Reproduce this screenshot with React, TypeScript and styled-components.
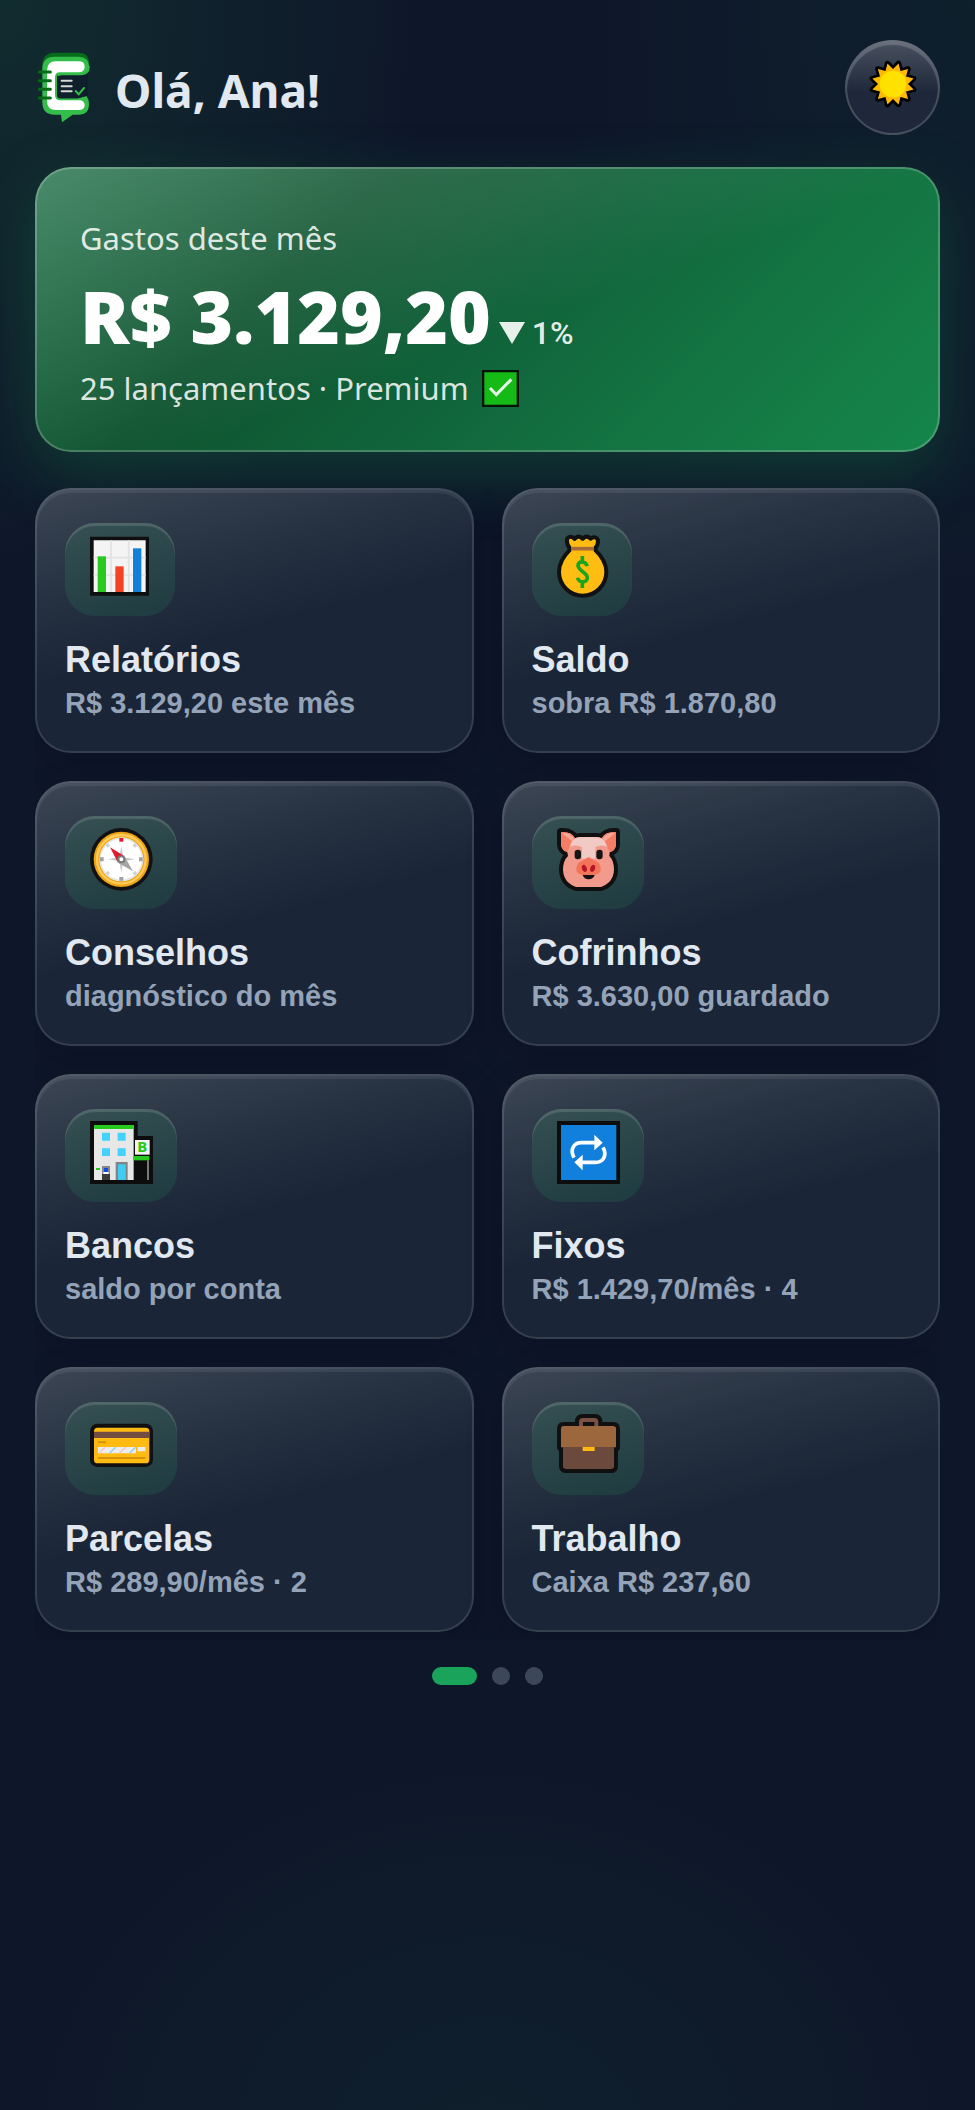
import React, { useState } from 'react';
import styled, { createGlobalStyle } from 'styled-components';

const uiFont = "'Segoe UI', 'Noto Sans', sans-serif";
const buttonFont = "'Liberation Sans', Arial, sans-serif";

const GlobalStyle = createGlobalStyle`
  * {
    box-sizing: border-box;
  }

  body {
    margin: 0;
    background: #0f172a;
    font-family: ${uiFont};
    color: #e2e8f0;
  }
`;

const Page = styled.main`
  min-height: 100vh;
  padding: 40px 35px;
  background:
    radial-gradient(ellipse 45% 28% at 0% 0%, rgba(34, 160, 80, 0.16), transparent),
    radial-gradient(ellipse 45% 36% at 100% 0%, rgba(20, 150, 90, 0.08), transparent),
    radial-gradient(ellipse 54% 21% at 50% 102%, rgba(24, 120, 70, 0.1), transparent),
    #0e1629;
`;

const Header = styled.header`
  display: flex;
  align-items: center;
  justify-content: space-between;
  margin-bottom: 32px;
`;

const Brand = styled.div`
  display: flex;
  align-items: center;
  gap: 22px;
`;

const Greeting = styled.h1`
  margin: 0;
  padding-top: 4px;
  font-size: 46px;
  line-height: 56px;
  font-weight: 700;
`;

const ThemeButton = styled.button`
  display: flex;
  align-items: center;
  justify-content: center;
  width: 95px;
  height: 95px;
  padding: 0 0 8px;
  border: 2px solid rgba(255, 255, 255, 0.18);
  border-radius: 50%;
  background: linear-gradient(180deg, rgba(255, 255, 255, 0.2), rgba(255, 255, 255, 0) 55%), #1e283a;
  background-origin: border-box;
  box-shadow: inset 0 3px 1px rgba(255, 255, 255, 0.18);
  cursor: pointer;
`;

const Hero = styled.section`
  padding: 46px 43px 39px;
  border: 2px solid rgba(255, 255, 255, 0.22);
  border-radius: 36px;
  background:
    linear-gradient(160deg, rgba(255, 255, 255, 0.22), rgba(255, 255, 255, 0.1) 30%, rgba(255, 255, 255, 0) 55%),
    linear-gradient(135deg, #166a40 0%, #0f5430 30%, #10633a 52%, #147643 75%, #15864b 100%);
  background-origin: border-box;
  box-shadow: 0 22px 64px rgba(22, 150, 80, 0.28);
  margin-bottom: 36px;
`;

const HeroText = styled.p`
  display: flex;
  align-items: center;
  gap: 13px;
  margin: 0;
  font-size: 31px;
  line-height: 46px;
  color: rgba(255, 255, 255, 0.85);
`;

const AmountRow = styled.div`
  display: flex;
  align-items: baseline;
  gap: 8px;
  margin: 13px 0 7px;
`;

const Amount = styled.strong`
  font-size: 73px;
  line-height: 84px;
  font-weight: 900;
  color: #fff;
`;

const Change = styled.span`
  display: flex;
  align-items: baseline;
  gap: 7px;
  font-family: Roboto, sans-serif;
  font-size: 32px;
  font-weight: 500;
  color: rgba(255, 255, 255, 0.9);
`;

const Carousel = styled.div`
  overflow: hidden;
  padding-bottom: 8px;
`;

const Grid = styled.div`
  display: grid;
  grid-template-columns: repeat(2, 1fr);
  gap: 28px;
`;

const Card = styled.button`
  display: flex;
  flex-direction: column;
  align-items: flex-start;
  padding: 33px 28px 30px;
  border: 2px solid rgba(255, 255, 255, 0.12);
  border-radius: 36px;
  background:
    linear-gradient(165deg, rgba(255, 255, 255, 0.15), rgba(255, 255, 255, 0.05) 30%, rgba(255, 255, 255, 0) 52%),
    #1a2637;
  background-origin: border-box;
  box-shadow: inset 0 3px 1px rgba(255, 255, 255, 0.08), 0 12px 36px rgba(12, 8, 28, 0.18);
  font-family: ${buttonFont};
  font-weight: 700;
  text-align: left;
  cursor: pointer;
`;

const Chip = styled.span`
  display: flex;
  height: 93px;
  padding: 12px 25px;
  margin-bottom: 24px;
  border-radius: 30px;
  background: linear-gradient(165deg, #365053, #203d41 90%);
  box-shadow: inset 0 3px 1px rgba(255, 255, 255, 0.14);

  svg {
    overflow: visible;
  }
`;

const CardTitle = styled.span`
  font-size: 36px;
  line-height: 40px;
  color: #e2e8f0;
  margin-bottom: 5px;
`;

const CardHint = styled.span`
  font-size: 29px;
  line-height: 36px;
  color: #94a3b8;
`;

const Pager = styled.nav`
  display: flex;
  justify-content: center;
  gap: 15px;
  margin-top: 27px;
`;

type DotProps = {
  $active: boolean;
}
const Dot = styled.button<DotProps>`
  width: ${props => props.$active ? '45px' : '18px'};
  height: 18px;
  padding: 0;
  border: 0;
  border-radius: 9px;
  background: ${props => props.$active ? '#19a35b' : '#3d475a'};
  cursor: pointer;
`;

const Logo = () => (
  <svg width="58" height="71" viewBox="-9 0 174 213" aria-hidden="true">
    <path d="M50 2H122Q153 2 153 34V60H13V42Q13 2 50 2Z" fill="#076b1c" />
    <path
      d="M50 14H122Q153 16 153 42Q153 66 130 67H68Q57 67 57 78V128Q57 139 68 139H122L145 131Q153 142 153 156Q153 188 122 188H104L72 211L69 188H50Q13 188 13 150V52Q13 14 50 14Z"
      fill="#34bd4b"
    />
    <path d="M57 78Q57 67 68 67H128Q146 64 150 56V131L118 139H68Q57 139 57 128Z" fill="#0f1f2b" />
    <path d="M60 71Q64 67 72 67H130Q153 66 153 42" fill="none" stroke="#34bd4b" strokeWidth="5" />
    <path
      d="M54 28H122Q140 28 140 44Q140 60 122 61H66Q51 61 51 76V130Q51 145 66 145H128Q140 148 140 160Q140 174 122 174H54Q27 174 27 146V56Q27 28 54 28Z"
      fill="#fff"
    />
    <path d="M4 60H37M4 86H37M4 112H37M4 138H37" stroke="#066a19" strokeWidth="9" strokeLinecap="round" />
    <path d="M71 86H101M71 103H101M71 118H101" stroke="#d5d8d5" strokeWidth="6" strokeLinecap="round" />
    <path d="M113 117L122 127L138 108" fill="none" stroke="#34bd4b" strokeWidth="6" strokeLinecap="round" />
  </svg>
);

// 24 alternating vertices, twelve rays
const sunPoints = Array.from({ length: 24 }, (_, i) => {
  const radius = i % 2 ? 64 : 45;
  const angle = (i * Math.PI) / 12;
  return `${(radius * Math.sin(angle)).toFixed(1)},${(-radius * Math.cos(angle)).toFixed(1)}`;
}).join(' ');

const SunIcon = () => (
  <svg width="48" height="48" viewBox="-72 -72 144 144" aria-hidden="true">
    <polygon points={sunPoints} fill="#000" stroke="#000" strokeWidth="16" strokeLinejoin="round" />
    <polygon points={sunPoints} fill="#ffb900" />
    <circle r="40" fill="#ffe100" />
  </svg>
);

const CheckIcon = () => (
  <svg width="37" height="37" viewBox="0 0 111 111" role="img" aria-label="ativo">
    <path d="M0 0H111V111H0Z" fill="#06120a" />
    <path d="M7 7H104V104H7Z" fill="#16ba16" />
    <path d="M24 54L43 74L88 28" fill="none" stroke="#e6f3e8" strokeWidth="9" />
  </svg>
);

const ChartIcon = () => (
  <svg width="60" height="63" viewBox="0 0 180 189" aria-hidden="true">
    <path d="M0 5H177V182H0Z" fill="#0f0f0f" />
    <path d="M11 16H167V171H11Z" fill="#f4f4f4" />
    <path d="M63 16V171M116 16V171M11 68H167M11 120H167" stroke="#e2e2e2" strokeWidth="5" />
    <path d="M23 64H48V171H23Z" fill="#28ca1f" />
    <path d="M76 94H101V171H76Z" fill="#f44323" />
    <path d="M129 40H154V171H129Z" fill="#1080dc" />
  </svg>
);

const bagShape = 'M36 14Q41 8 47 15Q53 21 59 14Q65 8 71 14Q77 21 83 14Q89 8 95 14Q101 20 107 14Q114 10 117 17Q118 25 110 36V49Q142 79 142 111A65 65 0 0 1 12 111Q12 79 43 49V36Q34 25 36 14Z';

const MoneyBagIcon = () => (
  <svg width="50" height="63" viewBox="0 0 150 189" aria-hidden="true">
    <path d={bagShape} fill="#111" stroke="#111" strokeWidth="24" strokeLinejoin="round" />
    <path d={bagShape} fill="#ffbd13" />
    <path d="M42 41H111" stroke="#a66a38" strokeWidth="11" />
    <path
      d="M76 63V80M76 143V159M90 94C88 78 63 76 63 91C63 108 91 112 91 128C91 146 64 144 62 128"
      fill="none"
      stroke="#1aa51d"
      strokeWidth="11"
    />
  </svg>
);

const CompassIcon = () => (
  <svg width="62" height="63" viewBox="0 0 186 189" aria-hidden="true">
    <circle cx="94" cy="94" r="94" fill="#111" />
    <circle cx="94" cy="94" r="83" fill="#eda514" />
    <circle cx="94" cy="94" r="73" fill="none" stroke="#ffcb5c" strokeWidth="7" />
    <circle cx="94" cy="94" r="66" fill="#e4e7ea" />
    <circle cx="94" cy="94" r="61" fill="#fff" />
    <path d="M94 54L100 88L134 94L100 100L94 134L88 100L54 94L88 88Z" fill="#c6c8ca" />
    <path d="M88 30H100V41H88Z" fill="#e2182f" />
    <path d="M88 147H100V158H88ZM30 88H41V100H30ZM147 88H158V100H147Z" fill="#9fa1a3" />
    <path
      d="M50 139L57 132M131 132L138 139M131 56L138 49M50 49L57 56"
      stroke="#cfd1d3"
      strokeWidth="10"
    />
    <path d="M60 58L103 84L84 104Z" fill="#e01b30" />
    <path d="M84 104L103 84L129 130Z" fill="#a5a5a5" />
    <circle cx="94" cy="94" r="9" fill="#fff" stroke="#7b7b7b" strokeWidth="6" />
  </svg>
);

const pigShape = 'M12 12Q43 10 54 31Q62 27 70 27H118Q127 27 134 31Q146 10 177 12V50Q176 67 158 73L157 84Q171 98 171 126Q169 164 132 177H57Q20 164 18 126Q18 98 33 84L31 73Q14 67 12 50Z';

const PigIcon = () => (
  <svg width="62" height="63" viewBox="0 0 186 189" aria-hidden="true">
    <path d={pigShape} fill="#101010" stroke="#101010" strokeWidth="24" strokeLinejoin="round" />
    <path d={pigShape} fill="#f29a8b" />
    <path d="M12 12Q43 10 54 31L40 47L32 71Q14 67 12 50ZM177 12Q146 10 134 31L148 47L157 71Q176 67 177 50Z" fill="#f57d66" />
    <path d="M17 17L45 40L51 31Q40 13 17 15ZM172 17L144 40L138 31Q149 13 172 15Z" fill="#f8a798" />
    <path d="M39 56Q45 28 70 28H118Q144 28 150 56Q132 48 115 57V92H75V57Q57 48 39 56Z" fill="#f2cac5" />
    <path d="M58 128Q55 105 76 98L95 87L114 98Q134 105 131 128Q127 142 95 142Q62 142 58 128Z" fill="#f47459" />
    <rect x="53" y="65" width="19" height="29" rx="9" fill="#161414" />
    <rect x="118" y="65" width="19" height="29" rx="9" fill="#161414" />
    <ellipse cx="82" cy="121" rx="7" ry="11" transform="rotate(-20 82 121)" fill="#b71525" />
    <ellipse cx="107" cy="121" rx="7" ry="11" transform="rotate(20 107 121)" fill="#b71525" />
    <path d="M77 141H113Q108 154 95 154Q82 154 77 141Z" fill="#111" />
  </svg>
);

const BankIcon = () => (
  <svg width="62" height="63" viewBox="0 0 186 189" aria-hidden="true">
    <path d="M0 0H143V45H189V189H0Z" fill="#0d0d0d" />
    <path d="M12 12H131V177H12Z" fill="#e7e7e7" />
    <path d="M12 12H131V24H12Z" fill="#27cb1e" />
    <path d="M36 35H60V59H36ZM83 35H107V59H83ZM36 82H60V105H36ZM83 82H107V105H83Z" fill="#42d2fb" />
    <path d="M18 141H30V147H18Z" fill="#27cb1e" />
    <path d="M36 135H60V165H36Z" fill="#85888b" />
    <path d="M42 141H54V153H42Z" fill="#104be0" />
    <path d="M40 153H56V159H40Z" fill="#fff" />
    <path d="M36 159H60V177H36Z" fill="#3b3b3b" />
    <path d="M77 123H113V177H77Z" fill="#818487" />
    <path d="M84 130H107V177H84Z" fill="#3fcdf4" />
    <path d="M135 57H179V101H135Z" fill="#f3f3f3" />
    <text x="157" y="93" textAnchor="middle" fontFamily="DejaVu Sans" fontSize="40" fontWeight="700" fill="#27cb1e">B</text>
    <path d="M130 105H178V118H130Z" fill="#27cb1e" />
    <path d="M174 118V177" stroke="#77797b" strokeWidth="6" />
  </svg>
);

const RepeatIcon = () => (
  <svg width="62" height="63" viewBox="0 0 186 189" aria-hidden="true">
    <path d="M0 0H189V189H0Z" fill="#0d0d0d" />
    <path d="M12 12H178V177H12Z" fill="#1180dc" />
    <path
      d="M51 110C37 84 52 65 73 65H116M138 79C152 105 137 124 116 124H73"
      fill="none"
      stroke="#fff"
      strokeWidth="11"
    />
    <path d="M112 41L137 65L112 88ZM77 101L52 124L77 148Z" fill="#fff" />
  </svg>
);

const CreditCardIcon = () => (
  <svg width="62" height="63" viewBox="0 0 186 189" aria-hidden="true">
    <rect x="0" y="29" width="189" height="130" rx="22" fill="#101010" />
    <rect x="12" y="41" width="166" height="107" rx="11" fill="#ffbb12" />
    <path d="M12 53H178V72H12Z" fill="#724d40" />
    <path d="M24 85H48M24 132H166" stroke="#d6920b" strokeWidth="6" />
    <path d="M24 99H138V118H24ZM143 99H166V112H143Z" fill="#ececec" />
    <path d="M27 117L45 100M89 117L107 100" stroke="#f4c4bd" strokeWidth="4" />
    <path d="M59 117L77 100M119 117L137 100" stroke="#8bcdf0" strokeWidth="4" />
  </svg>
);

const BriefcaseIcon = () => (
  <svg width="62" height="63" viewBox="0 0 186 189" aria-hidden="true">
    <path
      d="M20 36H66V24Q66 12 78 12H112Q124 12 124 24V36H168Q177 36 177 46V100H171V155Q171 165 161 165H28Q18 165 18 155V100H12V46Q12 36 20 36Z"
      fill="#101010"
      stroke="#101010"
      strokeWidth="24"
      strokeLinejoin="round"
    />
    <path d="M66 36V24Q66 12 78 12H112Q124 12 124 24V36H112V24H78V36Z" fill="#7b5145" />
    <path d="M20 36H168Q177 36 177 44V100H12V44Q12 36 20 36Z" fill="#9c673c" />
    <path d="M18 99H171V157Q171 165 161 165H28Q18 165 18 157Z" fill="#6c493d" />
    <path d="M77 99H113V111H77Z" fill="#ffbb12" />
  </svg>
);

const cards = [
  { title: 'Relatórios', hint: 'R$ 3.129,20 este mês', Icon: ChartIcon },
  { title: 'Saldo', hint: 'sobra R$ 1.870,80', Icon: MoneyBagIcon },
  { title: 'Conselhos', hint: 'diagnóstico do mês', Icon: CompassIcon },
  { title: 'Cofrinhos', hint: 'R$ 3.630,00 guardado', Icon: PigIcon },
  { title: 'Bancos', hint: 'saldo por conta', Icon: BankIcon },
  { title: 'Fixos', hint: 'R$ 1.429,70/mês · 4', Icon: RepeatIcon },
  { title: 'Parcelas', hint: 'R$ 289,90/mês · 2', Icon: CreditCardIcon },
  { title: 'Trabalho', hint: 'Caixa R$ 237,60', Icon: BriefcaseIcon },
];

const App = () => {
  const [page, setPage] = useState(0);

  return (
    <>
      <GlobalStyle />
      <Page>
        <Header>
          <Brand>
            <Logo />
            <Greeting>Olá, Ana!</Greeting>
          </Brand>
          <ThemeButton aria-label="Mudar tema">
            <SunIcon />
          </ThemeButton>
        </Header>
        <Hero>
          <HeroText>Gastos deste mês</HeroText>
          <AmountRow>
            <Amount>R$ 3.129,20</Amount>
            <Change>
              <svg width="26" height="22" viewBox="0 0 26 22" aria-hidden="true">
                <path d="M0 0H26L13 22Z" fill="currentColor" />
              </svg>
              1%
            </Change>
          </AmountRow>
          <HeroText>
            25 lançamentos · Premium
            <CheckIcon />
          </HeroText>
        </Hero>
        <Carousel>
          <Grid>
            {cards.map(({ title, hint, Icon }) => (
              <Card key={title}>
                <Chip><Icon /></Chip>
                <CardTitle>{title}</CardTitle>
                <CardHint>{hint}</CardHint>
              </Card>
            ))}
          </Grid>
        </Carousel>
        <Pager aria-label="Páginas">
          {[0, 1, 2].map(i => (
            <Dot
              key={i}
              $active={i === page}
              aria-label={`Página ${i + 1}`}
              onClick={() => setPage(i)}
            />
          ))}
        </Pager>
      </Page>
    </>
  );
};

export default App;
